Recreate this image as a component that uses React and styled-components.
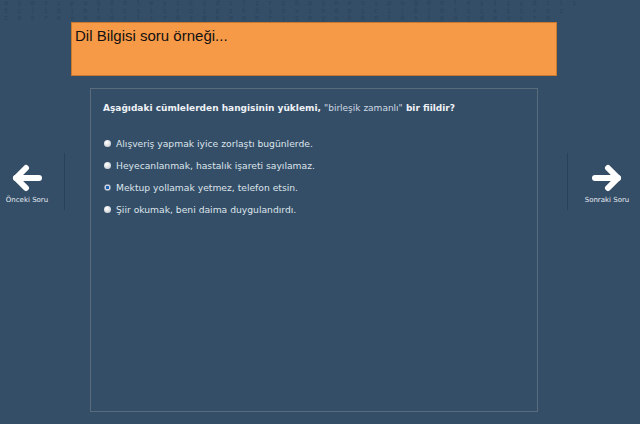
import styled, { createGlobalStyle } from "styled-components";

const GlobalStyle = createGlobalStyle`
  html, body {
    margin: 0;
    padding: 0;
    background: #344e68;
  }
  body {
    width: 640px;
    height: 424px;
    overflow: hidden;
    font-family: "DejaVu Sans", Verdana, sans-serif;
  }
`;

const Page = styled.div`
  width: 640px;
  height: 424px;
  background: #344e68;
  display: flex;
  flex-direction: column;
`;

const Texture = styled.div`
  height: 22px;
  overflow: hidden;
  font-family: "DejaVu Sans Mono", monospace;
  font-size: 7px;
  line-height: 7.5px;
  letter-spacing: 9px;
  white-space: nowrap;
  color: #2b435c;
  margin-bottom: -22px;
  padding-left: 4px;
`;

const Header = styled.div`
  margin: 22px 0 0 71px;
  width: 486px;
  height: 54px;
  box-sizing: border-box;
  background: #f79a48;
  border: 1px solid #c8782f;
  padding: 4px 3px;
  font-family: "Liberation Sans", Arial, sans-serif;
  font-size: 15px;
  color: #111;
`;

const Body = styled.div`
  display: flex;
  align-items: flex-start;
  margin-top: 12px;
`;

const Side = styled.div`
  display: flex;
  align-items: stretch;
  margin-top: 65px;
  height: 57px;
  width: ${(p) => p.$width}px;
  flex-direction: ${(p) => (p.$right ? "row" : "row-reverse")};
`;

const Divider = styled.div`
  width: 1px;
  background: #2a4259;
`;

const NavButton = styled.button`
  flex: 1;
  background: none;
  border: 0;
  margin: 0;
  display: flex;
  flex-direction: column;
  align-items: center;
  font-family: "DejaVu Sans", Verdana, sans-serif;
  font-size: 7px;
  color: #e4e9ef;
  cursor: pointer;
  padding: 11px 0 0;
  ${(p) => (p.$right ? "padding-left: 6px;" : "padding-right: 10px;")}

  svg {
    display: block;
    margin-bottom: 4px;
  }
`;

const Panel = styled.div`
  margin-left: ${(p) => p.$gap}px;
  margin-right: 29px;
  width: 448px;
  height: 324px;
  box-sizing: border-box;
  border: 1px solid #5a6b7c;
  padding: 14px 12px;
  color: #e2e8ee;
`;

const Question = styled.p`
  margin: 0 0 24px;
  font-size: 9px;
  font-weight: bold;
  color: #eef2f6;

  span {
    font-weight: normal;
    color: #d0d9e2;
  }
`;

const Options = styled.div`
  display: flex;
  flex-direction: column;
  gap: 9px;
`;

const Option = styled.label`
  display: flex;
  align-items: center;
  gap: 5px;
  height: 13px;
  font-size: 9.2px;
  color: #dde4ea;
`;

const Radio = styled.span`
  width: 7px;
  height: 7px;
  border-radius: 50%;
  box-sizing: border-box;
  margin-left: 1px;
  background: ${(p) =>
    p.$checked
      ? "radial-gradient(circle, #1f5fb4 0 1.6px, #eef1f4 2.1px)"
      : "radial-gradient(circle at 40% 35%, #ffffff, #bfc4ca)"};
  border: ${(p) => (p.$checked ? "1px solid #a3adb8" : "none")};
`;

const Arrow = ({ right }) => (
  <svg width="32" height="28" viewBox="0 0 32 28">
    <g
      fill="none"
      stroke="#fff"
      strokeWidth="6"
      strokeLinecap="round"
      strokeLinejoin="round"
      transform={right ? "translate(32,0) scale(-1,1)" : undefined}
    >
      <line x1="28" y1="14" x2="5" y2="14" />
      <polyline points="15,4 5,14 15,24" />
    </g>
  </svg>
);

const textureLines = [
  "ayesıpuğönleyiçydılırçöpynesıpuğönleyiçydılı",
  "tçjibjbtiçsiirozpzhöyovindeicijbjbtiçsiiroz",
  "cosrevandılıröşğemanriçnyubönlesıpaçdevıro",
];

const options = [
  "Alışveriş yapmak iyice zorlaştı bugünlerde.",
  "Heyecanlanmak, hastalık işareti sayılamaz.",
  "Mektup yollamak yetmez, telefon etsin.",
  "Şiir okumak, beni daima duygulandırdı.",
];

export default function App() {
  return (
    <Page>
      <GlobalStyle />
      <Texture>
        {textureLines.map((l) => (
          <div key={l}>{l}</div>
        ))}
      </Texture>
      <Header>Dil Bilgisi soru örneği...</Header>
      <Body>
        <Side $width={65}>
          <Divider />
          <NavButton>
            <Arrow />
            Önceki Soru
          </NavButton>
        </Side>
        <Panel $gap={25}>
          <Question>
            Aşağıdaki cümlelerden hangisinin yüklemi,{" "}
            <span>"birleşik zamanlı"</span> bir fiildir?
          </Question>
          <Options>
            {options.map((o, i) => (
              <Option key={o}>
                <Radio $checked={i === 2} />
                {o}
              </Option>
            ))}
          </Options>
        </Panel>
        <Side $width={73} $right>
          <Divider />
          <NavButton $right>
            <Arrow right />
            Sonraki Soru
          </NavButton>
        </Side>
      </Body>
    </Page>
  );
}
